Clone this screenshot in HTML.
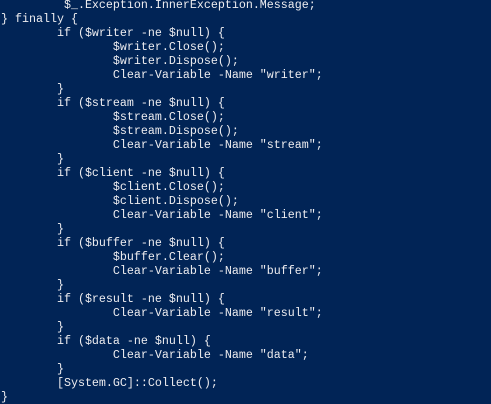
<!DOCTYPE html><html><head><style>
html,body{margin:0;padding:0;background:#012456;width:491px;height:404px;overflow:hidden}
pre{margin:0;position:absolute;left:1px;top:-2px;font-family:"Liberation Mono",monospace;font-size:11.67px;line-height:14px;color:#eeedf0;tab-size:8}
</style></head><body><pre>         $_.Exception.InnerException.Message;
} finally {
        if ($writer -ne $null) {
                $writer.Close();
                $writer.Dispose();
                Clear-Variable -Name "writer";
        }
        if ($stream -ne $null) {
                $stream.Close();
                $stream.Dispose();
                Clear-Variable -Name "stream";
        }
        if ($client -ne $null) {
                $client.Close();
                $client.Dispose();
                Clear-Variable -Name "client";
        }
        if ($buffer -ne $null) {
                $buffer.Clear();
                Clear-Variable -Name "buffer";
        }
        if ($result -ne $null) {
                Clear-Variable -Name "result";
        }
        if ($data -ne $null) {
                Clear-Variable -Name "data";
        }
        [System.GC]::Collect();
}</pre></body></html>
